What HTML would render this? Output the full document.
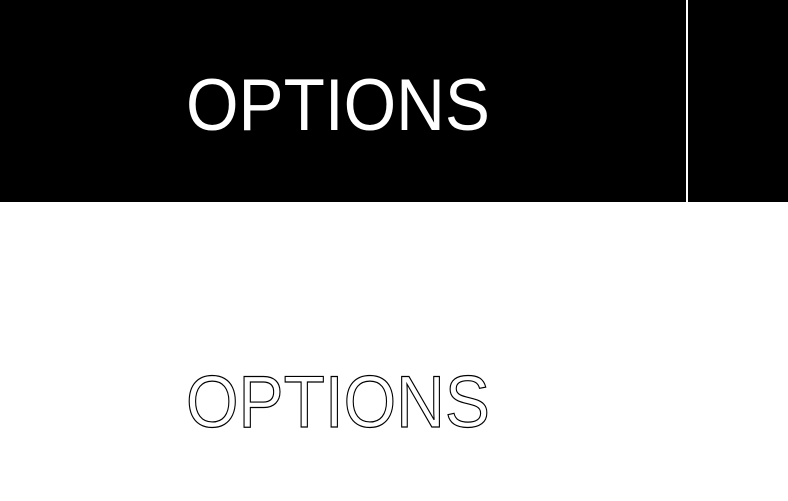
<!DOCTYPE html>
<html><head><meta charset="utf-8"><style>
html,body{margin:0;padding:0;background:#fff;width:788px;height:501px;overflow:hidden}
</style></head><body>
<svg width="788" height="501" xmlns="http://www.w3.org/2000/svg" style="display:block">
<rect x="0" y="0" width="686" height="202" fill="#000"/>
<rect x="688" y="0" width="100" height="202" fill="#000"/>
<text x="186" y="130" font-family="Liberation Sans, sans-serif" font-size="73" fill="#fff" textLength="304" lengthAdjust="spacingAndGlyphs">OPTIONS</text>
<text x="186" y="427" font-family="Liberation Sans, sans-serif" font-size="73" fill="#fff" stroke="#000" stroke-width="1.2" textLength="304" lengthAdjust="spacingAndGlyphs">OPTIONS</text>
</svg>
</body></html>
